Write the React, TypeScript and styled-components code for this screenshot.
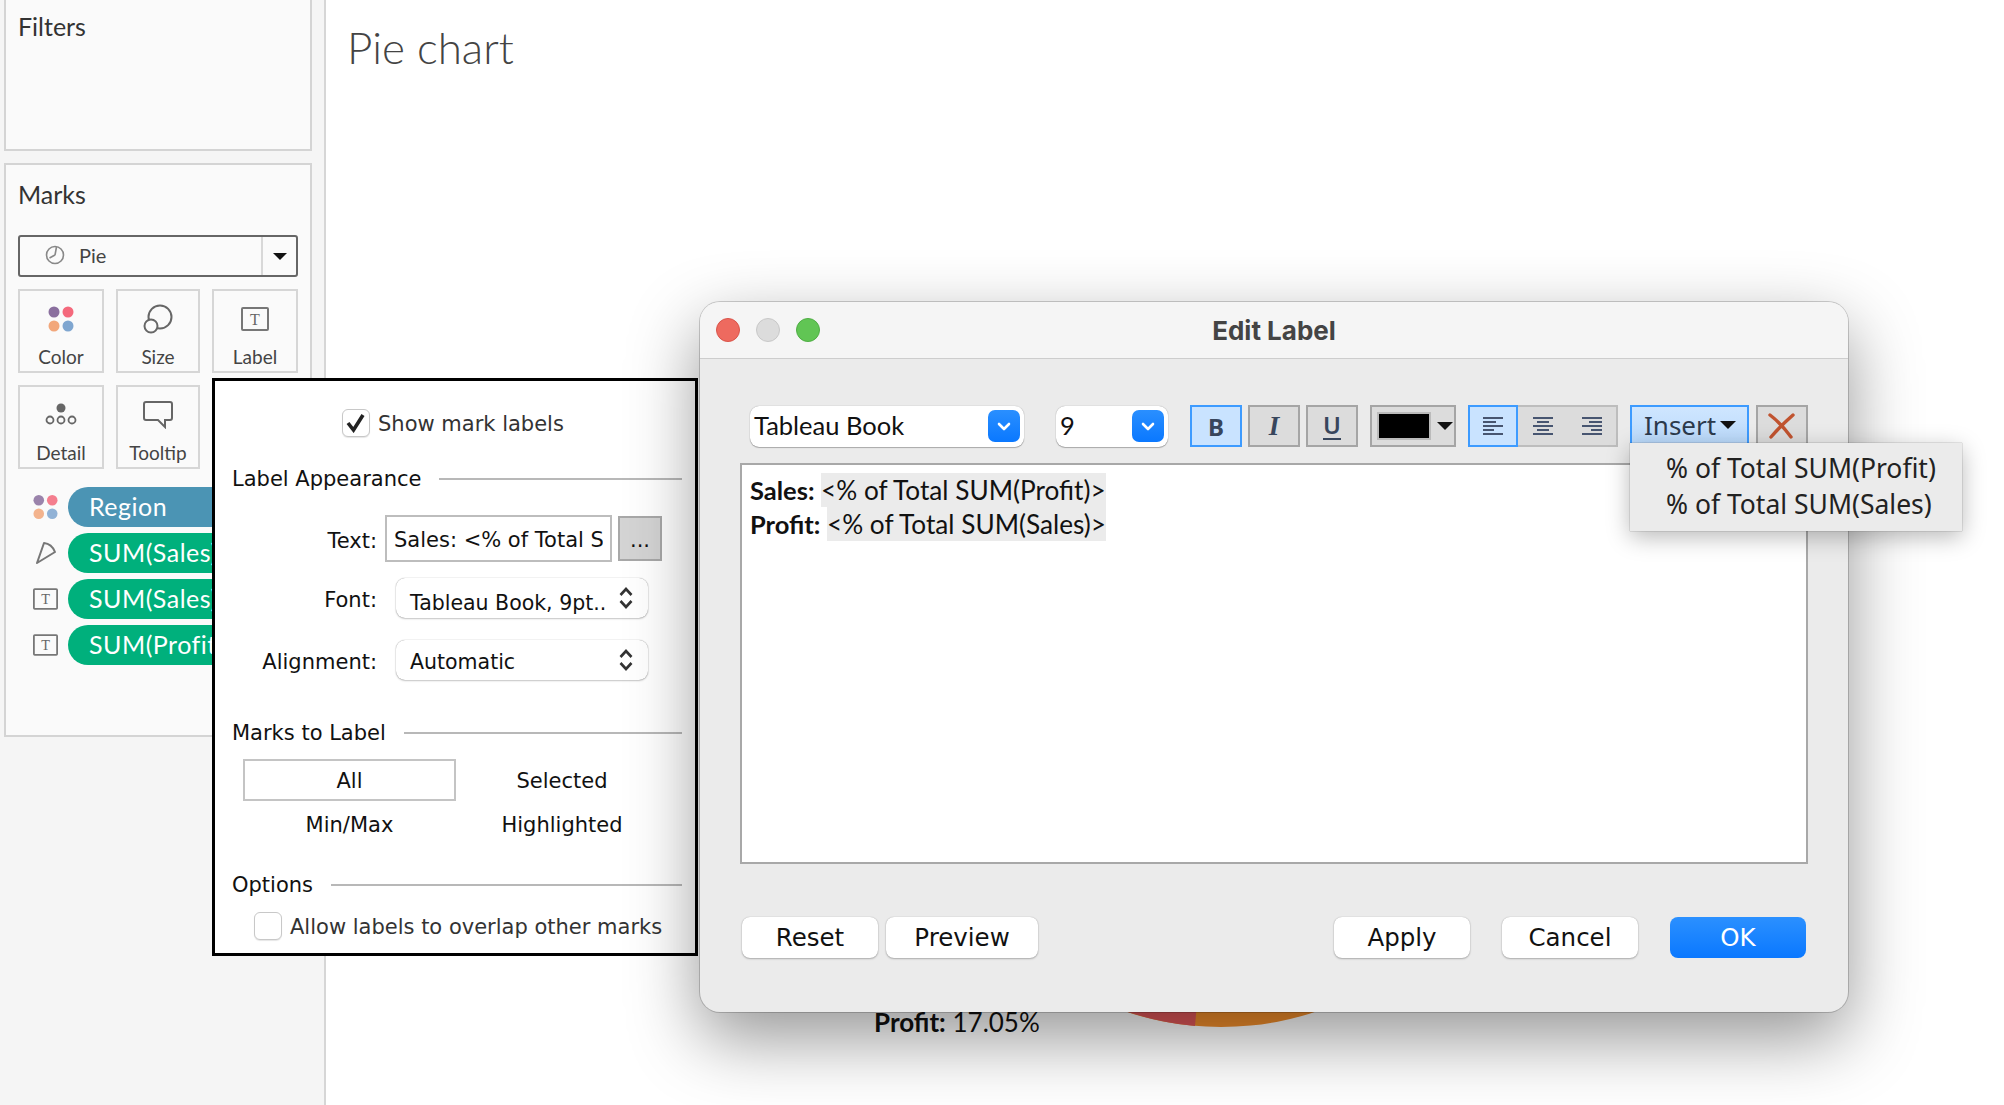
import React, { FC } from 'react'
import styled, { createGlobalStyle } from 'styled-components'

const BOOK = `Lato, "Open Sans", sans-serif`
const GRANDE = `"DejaVu Sans", "Noto Sans", sans-serif`
const NOTO = `"Noto Sans", sans-serif`

const GlobalStyle = createGlobalStyle`
	html, body {
		margin: 0;
		padding: 0;
		background: #fff;
	}
	* {
		box-sizing: border-box;
	}
`

const Caret: FC<{ width?: number; height?: number }> = ({ width = 16, height = 8 }) => (
	<svg width={width} height={height} viewBox="0 0 16 8">
		<path d="M0 0H16L8 8Z" fill="#111" />
	</svg>
)

const UpDown = () => (
	<svg width="16" height="24" viewBox="0 0 16 24" fill="none" stroke="#333" strokeWidth="2.6">
		<path d="M2.5 9 8 3l5.500 6M2.500 15 8 21l5.500-6" />
	</svg>
)

const Chevron = () => (
	<svg width="14" height="9" viewBox="0 0 14 9" fill="none" stroke="#fff" strokeWidth="2.600" strokeLinecap="round" strokeLinejoin="round">
		<path d="M2 2l5 5 5-5" />
	</svg>
)

const TextMarkIcon = () => (
	<svg width="28" height="24" viewBox="0 0 28 24">
		<rect x="1" y="1" width="26" height="22" rx="1" fill="none" stroke="#777" strokeWidth="2" />
		<text x="14" y="18" textAnchor="middle" fontFamily="Liberation Serif" fontSize="16" fill="#666">
			T
		</text>
	</svg>
)

const ColorDots: FC<{ faded?: boolean }> = ({ faded }) => (
	<svg width="26" height="26" viewBox="0 0 26 26" opacity={faded ? 0.85 : 1}>
		<circle cx="6" cy="6" r="5.500" fill="#8a6f9e" />
		<circle cx="20" cy="6" r="5.500" fill="#f4697c" />
		<circle cx="6" cy="20" r="5.500" fill="#f2a77b" />
		<circle cx="20" cy="20" r="5.500" fill="#7fa6d0" />
	</svg>
)

const SizeIcon = () => (
	<svg width="30" height="30" viewBox="0 0 30 30" fill="none" stroke="#666" strokeWidth="2">
		<circle cx="17" cy="13" r="11.500" />
		<circle cx="8" cy="22" r="6.500" fill="#fafafa" />
	</svg>
)

const DetailIcon = () => (
	<svg width="32" height="24" viewBox="0 0 32 24">
		<circle cx="16" cy="5" r="4.500" fill="#666" />
		<g fill="none" stroke="#666" strokeWidth="1.800">
			<circle cx="5" cy="17" r="3.500" />
			<circle cx="16" cy="17" r="3.500" />
			<circle cx="27" cy="17" r="3.500" />
		</g>
	</svg>
)

const TooltipIcon = () => (
	<svg width="30" height="28" viewBox="0 0 30 28" fill="none" stroke="#666" strokeWidth="2">
		<path d="M3 1h24a2 2 0 0 1 2 2v14a2 2 0 0 1-2 2h-5v7l-7-7H3a2 2 0 0 1-2-2V3a2 2 0 0 1 2-2z" />
	</svg>
)

const PieTypeIcon = () => (
	<svg width="20" height="20" viewBox="0 0 20 20" fill="none" stroke="#888" strokeWidth="1.600">
		<circle cx="10" cy="10" r="8.500" />
		<path d="M10 10 11.500 2M10 10 4.500 13" />
	</svg>
)

const AngleIcon = () => (
	<svg width="22" height="24" viewBox="0 0 22 24" fill="none" stroke="#777" strokeWidth="2" strokeLinejoin="round">
		<path d="M2 22 9 2c5 .5 9 4 11 9z" />
	</svg>
)

const AlignIcon: FC<{ rows: [number, number][] }> = ({ rows }) => (
	<svg width="20" height="18" viewBox="0 0 20 18" stroke="#475570" strokeWidth="2">
		{rows.map(([from, to], i) => (
			<path key={i} d={`M${from} ${1 + i * 4}H${to}`} />
		))}
	</svg>
)

const CloseIcon = () => (
	<svg width="28" height="26" viewBox="0 0 28 26" fill="none" stroke="#c0532f" strokeWidth="3.400" strokeLinecap="round">
		<path d="M2 2c8 6 15 14 21 22M25 2C17 9 9 17 3 24" />
	</svg>
)

const ALIGN_LEFT: [number, number][] = [[0, 20], [0, 13], [0, 20], [0, 11], [0, 20]]
const ALIGN_CENTER: [number, number][] = [[0, 20], [4, 16], [0, 20], [4, 16], [0, 20]]
const ALIGN_RIGHT: [number, number][] = [[0, 20], [7, 20], [0, 20], [9, 20], [0, 20]]

const MARK_ROWS = [
	{ label: 'Region', icon: <ColorDots faded />, color: '#4b94b4' },
	{ label: 'SUM(Sales)', icon: <AngleIcon />, color: '#00b07c' },
	{ label: 'SUM(Sales)', icon: <TextMarkIcon />, color: '#00b07c' },
	{ label: 'SUM(Profit)', icon: <TextMarkIcon />, color: '#00b07c' },
]

const MARK_CARDS = [
	{ label: 'Color', icon: <ColorDots /> },
	{ label: 'Size', icon: <SizeIcon /> },
	{ label: 'Label', icon: <TextMarkIcon /> },
	{ label: 'Detail', icon: <DetailIcon /> },
	{ label: 'Tooltip', icon: <TooltipIcon /> },
]

const App: FC = () => (
	<Page>
		<GlobalStyle />
		<Sidebar>
			<FiltersPanel>Filters</FiltersPanel>
			<MarksPanel>
				<PanelTitle>Marks</PanelTitle>
				<MarkTypeSelect>
					<MarkTypeValue>
						<PieTypeIcon />
						Pie
					</MarkTypeValue>
					<MarkTypeArrow>
						<Caret width={14} height={7} />
					</MarkTypeArrow>
				</MarkTypeSelect>
				<CardGrid>
					{MARK_CARDS.map(({ label, icon }) => (
						<MarkCard key={label}>
							<CardIcon>{icon}</CardIcon>
							{label}
						</MarkCard>
					))}
				</CardGrid>
				<PillList>
					{MARK_ROWS.map(({ label, icon, color }, i) => (
						<PillRow key={i}>
							<PillIcon>{icon}</PillIcon>
							<Pill $color={color}>{label}</Pill>
						</PillRow>
					))}
				</PillList>
			</MarksPanel>
		</Sidebar>
		<Main>
			<ChartTitle>Pie chart</ChartTitle>
			<PieLabel>
				<b>Profit:</b> 17.05%
			</PieLabel>
			<PieDrawing width="640" height="640" viewBox="0 0 640 640">
				<circle cx="320" cy="320" r="302" fill="#f28e2b" />
				<path d="M320 320 L294 621 A302 302 0 0 1 40 430Z" fill="#e15759" />
			</PieDrawing>
		</Main>

		<LabelPopup>
			<CheckRow $indent={127}>
				<CheckBox>
					<svg width="22" height="20" viewBox="0 0 22 20" fill="none" stroke="#222" strokeWidth="3.600">
						<path d="M3 10l5.500 7L18 2" />
					</svg>
				</CheckBox>
				<CheckText>Show mark labels</CheckText>
			</CheckRow>
			<SectionHeading $top={27}>Label Appearance</SectionHeading>
			<FormRow $top={21}>
				<FormLabel>Text:</FormLabel>
				<TextField>
					<TextFieldValue>Sales: &lt;% of Total S</TextFieldValue>
				</TextField>
				<EllipsisButton>...</EllipsisButton>
			</FormRow>
			<FormRow $top={16}>
				<FormLabel>Font:</FormLabel>
				<PopupSelect>
					<SelectValue $drop={10}>Tableau Book, 9pt..</SelectValue>
					<UpDown />
				</PopupSelect>
			</FormRow>
			<FormRow $top={22}>
				<FormLabel>Alignment:</FormLabel>
				<PopupSelect>
					<SelectValue $drop={4}>Automatic</SelectValue>
					<UpDown />
				</PopupSelect>
			</FormRow>
			<SectionHeading $top={38}>Marks to Label</SectionHeading>
			<ChoiceGrid>
				<Choice $selected>All</Choice>
				<Choice>Selected</Choice>
				<Choice>Min/Max</Choice>
				<Choice>Highlighted</Choice>
			</ChoiceGrid>
			<SectionHeading $top={25}>Options</SectionHeading>
			<CheckRow $indent={39} $top={12}>
				<CheckBox />
				<CheckText>Allow labels to overlap other marks</CheckText>
			</CheckRow>
		</LabelPopup>

		<Dialog>
			<TitleBar>
				<TrafficLights>
					<TrafficLight $color="#ee6a5f" $edge="#d9544a" />
					<TrafficLight $color="#dcdcdc" $edge="#c8c8c8" />
					<TrafficLight $color="#61c554" $edge="#4fae44" />
				</TrafficLights>
				<DialogTitle>Edit Label</DialogTitle>
			</TitleBar>
			<Toolbar>
				<ComboBox $width={274}>
					<ComboValue>Tableau Book</ComboValue>
					<ComboArrow>
						<Chevron />
					</ComboArrow>
				</ComboBox>
				<ComboBox $width={112} $gap={32}>
					<ComboValue>9</ComboValue>
					<ComboArrow>
						<Chevron />
					</ComboArrow>
				</ComboBox>
				<ToolButton $gap={22} $active>
					<b>B</b>
				</ToolButton>
				<ToolButton $gap={6}>
					<ItalicGlyph>I</ItalicGlyph>
				</ToolButton>
				<ToolButton $gap={6}>
					<UnderlineGlyph>U</UnderlineGlyph>
				</ToolButton>
				<ColorButton>
					<Swatch />
					<Caret width={16} height={8} />
				</ColorButton>
				<AlignGroup>
					<AlignButton $active>
						<AlignIcon rows={ALIGN_LEFT} />
					</AlignButton>
					<AlignButton>
						<AlignIcon rows={ALIGN_CENTER} />
					</AlignButton>
					<AlignButton>
						<AlignIcon rows={ALIGN_RIGHT} />
					</AlignButton>
				</AlignGroup>
				<InsertButton>
					Insert
					<Caret width={16} height={8} />
				</InsertButton>
				<ToolButton $gap={7}>
					<CloseIcon />
				</ToolButton>
			</Toolbar>
			<Editor>
				<EditorLine>
					<b>Sales:</b> <Field>&lt;% of Total SUM(Profit)&gt;</Field>
				</EditorLine>
				<EditorLine>
					<b>Profit:</b> <Field>&lt;% of Total SUM(Sales)&gt;</Field>
				</EditorLine>
			</Editor>
			<Footer>
				<FooterGroup $gap={8}>
					<FooterButton $width={136}>Reset</FooterButton>
					<FooterButton $width={152}>Preview</FooterButton>
				</FooterGroup>
				<FooterGroup $gap={32}>
					<FooterButton $width={136}>Apply</FooterButton>
					<FooterButton $width={136}>Cancel</FooterButton>
					<FooterButton $width={136} $primary>
						OK
					</FooterButton>
				</FooterGroup>
			</Footer>
			<InsertMenu>
				<InsertMenuItem>% of Total SUM(Profit)</InsertMenuItem>
				<InsertMenuItem>% of Total SUM(Sales)</InsertMenuItem>
			</InsertMenu>
		</Dialog>
	</Page>
)

const Page = styled.div`
	position: relative;
	display: flex;
	width: 2004px;
	height: 1105px;
	overflow: hidden;
	background: #fff;
	font-family: ${BOOK};
`

const Sidebar = styled.aside`
	display: flex;
	flex-direction: column;
	gap: 12px;
	width: 326px;
	height: 100%;
	padding-left: 4px;
	background: #f5f5f5;
	border-right: 2px solid #d6d6d6;
`

const FiltersPanel = styled.section`
	width: 308px;
	height: 151px;
	padding: 11px 12px;
	background: #fafafa;
	border: 2px solid #d4d4d4;
	border-top: none;
	color: #333;
	font-size: 25px;
`

const MarksPanel = styled.section`
	width: 308px;
	height: 574px;
	padding: 13px 12px;
	background: #fafafa;
	border: 2px solid #d4d4d4;
`

const PanelTitle = styled.h2`
	margin: 0;
	color: #333;
	font-size: 25px;
	font-weight: 400;
	line-height: 32px;
`

const MarkTypeSelect = styled.div`
	display: flex;
	width: 280px;
	height: 42px;
	margin-top: 25px;
	background: #fafafa;
	border: 2px solid #666;
	border-radius: 3px;
`

const MarkTypeValue = styled.div`
	display: flex;
	flex: 1;
	align-items: center;
	gap: 14px;
	padding: 0 0 2px 25px;
	color: #444;
	font-size: 20px;
`

const MarkTypeArrow = styled.div`
	display: flex;
	align-items: center;
	justify-content: center;
	width: 35px;
	border-left: 2px solid #d8d8d8;
`

const CardGrid = styled.div`
	display: grid;
	grid-template-columns: 86px 84px 86px;
	grid-auto-rows: 84px;
	gap: 12px;
	margin-top: 12px;
`

const MarkCard = styled.div`
	display: flex;
	flex-direction: column;
	align-items: center;
	justify-content: flex-end;
	padding-bottom: 1px;
	border: 2px solid #d6d6d6;
	color: #444;
	font-size: 19px;
	line-height: 26px;
`

const CardIcon = styled.div`
	display: flex;
	align-items: center;
	justify-content: center;
	height: 34px;
	margin-bottom: 8px;
`

const PillList = styled.div`
	display: flex;
	flex-direction: column;
	gap: 6px;
	margin-top: 18px;
`

const PillRow = styled.div`
	display: flex;
	align-items: center;
	height: 40px;
	margin-left: 15px;
	gap: 10px;
`

const PillIcon = styled.div`
	display: flex;
	justify-content: center;
	width: 25px;
	flex: none;
`

const Pill = styled.div<{ $color: string }>`
	width: 200px;
	height: 40px;
	padding-left: 21px;
	background: ${(props) => props.$color};
	border-radius: 20px 0 0 20px;
	color: #fff;
	font-size: 25px;
	letter-spacing: 0.5px;
	line-height: 39px;
	white-space: nowrap;
	overflow: hidden;
`

const Main = styled.main`
	position: relative;
	flex: 1;
	padding: 24px 21px;
`

const ChartTitle = styled.h1`
	margin: 0;
	color: #444;
	font-size: 44px;
	font-weight: 300;
	line-height: 46px;
`

const PieLabel = styled.div`
	position: absolute;
	left: 548px;
	top: 1006px;
	color: #111;
	font-size: 26px;
	line-height: 32px;
	white-space: nowrap;
`

const PieDrawing = styled.svg`
	position: absolute;
	left: 575px;
	top: 405px;
`

const LabelPopup = styled.div`
	position: absolute;
	left: 212px;
	top: 378px;
	width: 486px;
	height: 578px;
	padding-left: 17px;
	background: #fff;
	border: 3px solid #000;
	color: #111;
	font-family: ${GRANDE};
	font-size: 21px;
`

const CheckRow = styled.label<{ $indent: number; $top?: number }>`
	display: flex;
	align-items: center;
	gap: 8px;
	height: 28px;
	margin-top: ${(props) => props.$top ?? 28}px;
	padding-left: ${(props) => props.$indent - 17}px;
	color: #333;
`

const CheckText = styled.span`
	padding-top: 2px;
	white-space: nowrap;
`

const CheckBox = styled.span`
	display: flex;
	align-items: center;
	justify-content: center;
	width: 28px;
	height: 28px;
	background: #fff;
	border: 1px solid #c8c8c8;
	border-radius: 6px;
	box-shadow: 0 1px 1px rgba(0, 0, 0, 0.1);
`

const SectionHeading = styled.div<{ $top: number }>`
	display: flex;
	align-items: center;
	gap: 18px;
	width: 450px;
	height: 30px;
	margin-top: ${(props) => props.$top}px;
	white-space: nowrap;

	&::after {
		content: '';
		flex: 1;
		height: 2px;
		background: #b8b8b8;
	}
`

const FormRow = styled.div<{ $top: number }>`
	display: flex;
	align-items: center;
	margin-top: ${(props) => props.$top}px;
`

const FormLabel = styled.div`
	width: 145px;
	padding-top: 4px;
	text-align: right;
`

const TextField = styled.div`
	display: flex;
	align-items: center;
	width: 227px;
	height: 47px;
	margin-left: 8px;
	padding: 2px 7px 0 7px;
	border: 2px solid #bdbdbd;
	background: #fff;
`

const TextFieldValue = styled.div`
	overflow: hidden;
	white-space: nowrap;
`

const EllipsisButton = styled.div`
	width: 44px;
	height: 45px;
	margin-left: 6px;
	background: #d4d4d4;
	border: 2px solid #a8a8a8;
	line-height: 44px;
	text-align: center;
`

const PopupSelect = styled.div`
	display: flex;
	align-items: center;
	justify-content: space-between;
	width: 252px;
	height: 40px;
	margin-left: 19px;
	padding: 0 14px;
	background: #fff;
	border-radius: 9px;
	box-shadow: 0 0 1px rgba(0, 0, 0, 0.45), 0 1px 2px rgba(0, 0, 0, 0.2);
	white-space: nowrap;
`

const SelectValue = styled.span<{ $drop: number }>`
	padding-top: ${(props) => props.$drop}px;
	font-size: 20.500px;
`

const ChoiceGrid = styled.div`
	display: grid;
	grid-template-columns: 213px 212px;
	grid-auto-rows: 42px;
	row-gap: 2px;
	margin: 11px 0 0 11px;
`

const Choice = styled.div<{ $selected?: boolean }>`
	display: flex;
	align-items: center;
	justify-content: center;
	padding-top: 2px;
	border: 2px solid ${(props) => (props.$selected ? '#c4c4c4' : 'transparent')};
`

const Dialog = styled.div`
	position: absolute;
	left: 700px;
	top: 302px;
	width: 1148px;
	height: 710px;
	background: #ebebeb;
	border-radius: 20px;
	box-shadow: 0 0 0 1px rgba(0, 0, 0, 0.18), 0 26px 70px rgba(0, 0, 0, 0.42);
`

const TitleBar = styled.header`
	display: grid;
	grid-template-columns: 1fr auto 1fr;
	align-items: center;
	height: 57px;
	padding: 0 16px;
	background: #f5f5f5;
	border-bottom: 1px solid #cdcdcd;
	border-radius: 20px 20px 0 0;
`

const TrafficLights = styled.div`
	display: flex;
	gap: 16px;
`

const TrafficLight = styled.span<{ $color: string; $edge: string }>`
	width: 24px;
	height: 24px;
	background: ${(props) => props.$color};
	border: 1px solid ${(props) => props.$edge};
	border-radius: 50%;
`

const DialogTitle = styled.div`
	color: #444;
	font-family: Inter, sans-serif;
	font-size: 26px;
	font-weight: 700;
`

const Toolbar = styled.div`
	display: flex;
	align-items: center;
	height: 42px;
	margin-top: 46px;
	padding-left: 50px;
`

const ComboBox = styled.div<{ $width: number; $gap?: number }>`
	display: flex;
	align-items: center;
	justify-content: space-between;
	width: ${(props) => props.$width}px;
	height: 41px;
	margin-left: ${(props) => props.$gap ?? 0}px;
	padding: 0 4px;
	background: #fff;
	border-radius: 9px;
	box-shadow: 0 0 1px rgba(0, 0, 0, 0.4), 0 1px 1px rgba(0, 0, 0, 0.25);
	color: #111;
	font-size: 25.500px;
`

const ComboValue = styled.span`
	padding-bottom: 2px;
`

const ComboArrow = styled.span`
	display: flex;
	align-items: center;
	justify-content: center;
	width: 32px;
	height: 32px;
	background: linear-gradient(#2a8fff, #0a78ff);
	border-radius: 7px;
`

const ToolButton = styled.div<{ $gap?: number; $active?: boolean }>`
	display: flex;
	align-items: center;
	justify-content: center;
	width: 52px;
	height: 42px;
	margin-left: ${(props) => props.$gap ?? 0}px;
	background: ${(props) => (props.$active ? '#c9e3ff' : '#dcdcdc')};
	border: 2px solid ${(props) => (props.$active ? '#3d9bff' : '#a5a5a5')};
	color: #38465c;
	font-family: ${NOTO};
	font-size: 24px;
`

const ItalicGlyph = styled.span`
	font-family: 'Liberation Serif', serif;
	font-style: italic;
	font-weight: 700;
	font-size: 27px;
`

const UnderlineGlyph = styled.span`
	padding-bottom: 1px;
	border-bottom: 2px solid #38465c;
	font-weight: 600;
	line-height: 24px;
`

const ColorButton = styled.div`
	display: flex;
	align-items: center;
	gap: 6px;
	width: 86px;
	height: 42px;
	margin-left: 12px;
	padding-left: 5px;
	background: #dcdcdc;
	border: 2px solid #a5a5a5;
`

const Swatch = styled.span`
	width: 54px;
	height: 28px;
	background: #000;
	border: 2px solid #bbb;
`

const AlignGroup = styled.div`
	display: flex;
	width: 150px;
	height: 42px;
	margin-left: 12px;
	background: #dcdcdc;
	border: 2px solid #bdbdbd;
`

const AlignButton = styled.div<{ $active?: boolean }>`
	display: flex;
	flex: ${(props) => (props.$active ? '0 0 50px' : '1')};
	align-items: center;
	justify-content: center;
	margin: ${(props) => (props.$active ? '-2px 0 -2px -2px' : '0')};
	background: ${(props) => (props.$active ? '#c9e3ff' : 'transparent')};
	border: ${(props) => (props.$active ? '2px solid #3d9bff' : 'none')};
`

const InsertButton = styled.div`
	display: flex;
	align-items: center;
	gap: 4px;
	width: 119px;
	height: 42px;
	margin-left: 12px;
	padding: 0 0 2px 12px;
	background: linear-gradient(#cfe6ff, #b9d9fb);
	border: 2px solid #3d9bff;
	color: #2c3a4c;
	font-family: ${NOTO};
	font-size: 26px;
`

const Editor = styled.div`
	width: 1068px;
	height: 401px;
	margin: 16px 0 0 40px;
	padding: 8px 8px;
	background: #fff;
	border: 2px solid #a8a8a8;
	color: #111;
	font-size: 25.500px;
`

const EditorLine = styled.div`
	height: 34px;
	line-height: 34px;
	white-space: pre;
`

const Field = styled.span`
	display: inline-block;
	background: #ebebeb;
	font-size: 26.200px;
`

const Footer = styled.footer`
	display: flex;
	justify-content: space-between;
	margin-top: 53px;
	padding: 0 42px;
`

const FooterGroup = styled.div<{ $gap: number }>`
	display: flex;
	gap: ${(props) => props.$gap}px;
`

const FooterButton = styled.div<{ $width: number; $primary?: boolean }>`
	width: ${(props) => props.$width}px;
	height: 41px;
	background: ${(props) => (props.$primary ? 'linear-gradient(#2b90ff, #0a78ff)' : '#fff')};
	border-radius: 8px;
	box-shadow: ${(props) =>
		props.$primary ? 'none' : '0 0 1px rgba(0, 0, 0, 0.3), 0 1px 2px rgba(0, 0, 0, 0.25)'};
	color: ${(props) => (props.$primary ? '#fff' : '#111')};
	font-family: ${GRANDE};
	font-size: 24.500px;
	line-height: 41px;
	text-align: center;
`

const InsertMenu = styled.div`
	position: absolute;
	left: 930px;
	top: 141px;
	width: 332px;
	height: 88px;
	padding: 7px 0 0 36px;
	background: #ebebeb;
	box-shadow: 0 0 1px rgba(0, 0, 0, 0.5), 0 6px 22px rgba(0, 0, 0, 0.28);
	color: #222;
	font-family: ${NOTO};
	font-size: 26.500px;
`

const InsertMenuItem = styled.div`
	height: 36px;
	line-height: 36px;
	white-space: nowrap;
`

export default App
